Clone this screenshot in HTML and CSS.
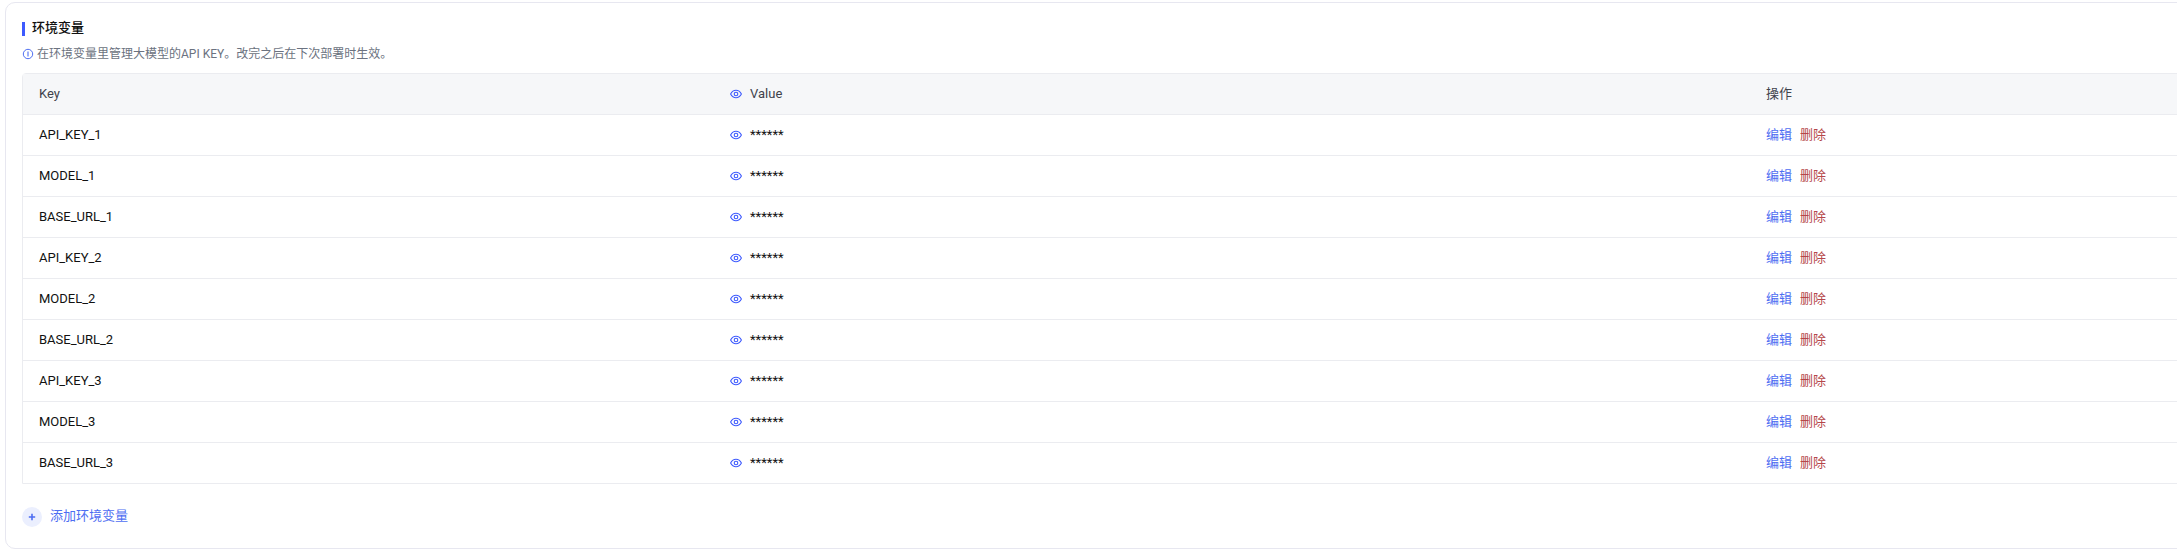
FILE: index.html
```html
<!DOCTYPE html>
<html lang="zh">
<head>
<meta charset="utf-8">
<title>环境变量</title>
<link rel="stylesheet" href="styles.css">
</head>
<body>
<svg class="sprites" width="0" height="0" aria-hidden="true">
  <symbol id="eye" viewBox="0 0 12 12">
    <path d="M.6 6C1.8 3.7 3.7 2.3 6 2.3S10.2 3.7 11.4 6C10.2 8.3 8.3 9.7 6 9.7S1.8 8.3.6 6Z" fill="none" stroke="currentColor" stroke-width="1.1"/>
    <circle cx="6" cy="6" r="1.8" fill="none" stroke="currentColor" stroke-width="1.1"/>
  </symbol>
</svg>
<main class="card">
  <h2 class="title">环境变量</h2>
  <p class="hint">
    <svg class="hint-icon" viewBox="0 0 12 12" aria-hidden="true">
      <circle cx="6" cy="6" r="4.7" fill="none" stroke="currentColor" stroke-width="1"/>
      <path d="M6 3.4v5.2" stroke="currentColor" stroke-width="1.1"/>
    </svg>
    在环境变量里管理大模型的API KEY。改完之后在下次部署时生效。
  </p>
  <table class="env-table">
    <colgroup><col class="col-key"><col class="col-value"><col class="col-action"></colgroup>
    <thead>
      <tr>
        <th>Key</th>
        <th><span class="value-cell"><svg class="eye"><use href="#eye"/></svg>Value</span></th>
        <th>操作</th>
      </tr>
    </thead>
    <tbody>
      <tr><td>API_KEY_1</td><td><span class="value-cell"><svg class="eye"><use href="#eye"/></svg><span class="mask">******</span></span></td><td><a class="edit">编辑</a><a class="del">删除</a></td></tr>
      <tr><td>MODEL_1</td><td><span class="value-cell"><svg class="eye"><use href="#eye"/></svg><span class="mask">******</span></span></td><td><a class="edit">编辑</a><a class="del">删除</a></td></tr>
      <tr><td>BASE_URL_1</td><td><span class="value-cell"><svg class="eye"><use href="#eye"/></svg><span class="mask">******</span></span></td><td><a class="edit">编辑</a><a class="del">删除</a></td></tr>
      <tr><td>API_KEY_2</td><td><span class="value-cell"><svg class="eye"><use href="#eye"/></svg><span class="mask">******</span></span></td><td><a class="edit">编辑</a><a class="del">删除</a></td></tr>
      <tr><td>MODEL_2</td><td><span class="value-cell"><svg class="eye"><use href="#eye"/></svg><span class="mask">******</span></span></td><td><a class="edit">编辑</a><a class="del">删除</a></td></tr>
      <tr><td>BASE_URL_2</td><td><span class="value-cell"><svg class="eye"><use href="#eye"/></svg><span class="mask">******</span></span></td><td><a class="edit">编辑</a><a class="del">删除</a></td></tr>
      <tr><td>API_KEY_3</td><td><span class="value-cell"><svg class="eye"><use href="#eye"/></svg><span class="mask">******</span></span></td><td><a class="edit">编辑</a><a class="del">删除</a></td></tr>
      <tr><td>MODEL_3</td><td><span class="value-cell"><svg class="eye"><use href="#eye"/></svg><span class="mask">******</span></span></td><td><a class="edit">编辑</a><a class="del">删除</a></td></tr>
      <tr><td>BASE_URL_3</td><td><span class="value-cell"><svg class="eye"><use href="#eye"/></svg><span class="mask">******</span></span></td><td><a class="edit">编辑</a><a class="del">删除</a></td></tr>
    </tbody>
  </table>
  <button class="add" type="button">
    <span class="add-icon"><svg viewBox="0 0 8 8" aria-hidden="true"><path d="M4 .8v6.4M.8 4h6.4" stroke="currentColor" stroke-width="1.6"/></svg></span>
    <span class="add-label">添加环境变量</span>
  </button>
</main>
</body>
</html>
```

FILE: styles.css
```css
* { box-sizing: border-box; }
html, body { margin: 0; height: 100%; overflow: hidden; background: #fff; }
body {
  font-family: Roboto, "Noto Sans CJK SC", sans-serif;
  font-size: 13px;
  line-height: 18px;
  color: #111;
  padding: 2px 0 0 5px;
}
.sprites { position: absolute; }
.card {
  width: 2400px;
  height: 547px;
  padding: 19px 16px 0;
  background: #fff;
  border: 1px solid #e7e7f0;
  border-radius: 10px;
}
.title {
  margin: 0;
  height: 14px;
  line-height: 12px;
  padding-left: 7px;
  border-left: 3px solid #3d5afe;
  font-size: 13px;
  font-weight: 500;
  color: #111;
}
.hint {
  display: flex;
  align-items: center;
  gap: 3px;
  margin: 10px 0 0;
  height: 16px;
  font-size: 12px;
  color: #6b7280;
}
.hint-icon { width: 12px; height: 12px; color: #4e6ef2; }
.env-table {
  width: 2300px;
  margin-top: 11px;
  table-layout: fixed;
  border-collapse: separate;
  border-spacing: 0;
  border: 1px solid #ebecf0;
  border-radius: 4px 0 0 0;
}
.col-key { width: 691px; }
.col-value { width: 1036px; }
.env-table th, .env-table td {
  height: 41px;
  padding: 0 16px;
  text-align: left;
  border-bottom: 1px solid #ebecf0;
}
.env-table th {
  font-weight: 400;
  color: #3f434c;
  background: #f6f7f9;
}
.env-table tbody tr:last-child td { height: 40px; border-bottom: 0; }
.value-cell { display: flex; align-items: center; gap: 8px; }
.eye { width: 12px; height: 12px; color: #3d5afe; flex: none; }
.edit { color: #4e6ef2; margin-right: 8px; }
.del { color: #b5474a; }
.add {
  display: flex;
  align-items: center;
  gap: 8px;
  margin-top: 23px;
  padding: 0;
  border: 0;
  background: none;
  font: inherit;
  color: #4e6ef2;
}
.add-icon {
  display: flex;
  align-items: center;
  justify-content: center;
  width: 20px;
  height: 20px;
  border-radius: 50%;
  background: #ebeffe;
}
.add-icon svg { width: 8px; height: 8px; }
.add-label { margin-top: -2px; }
```
